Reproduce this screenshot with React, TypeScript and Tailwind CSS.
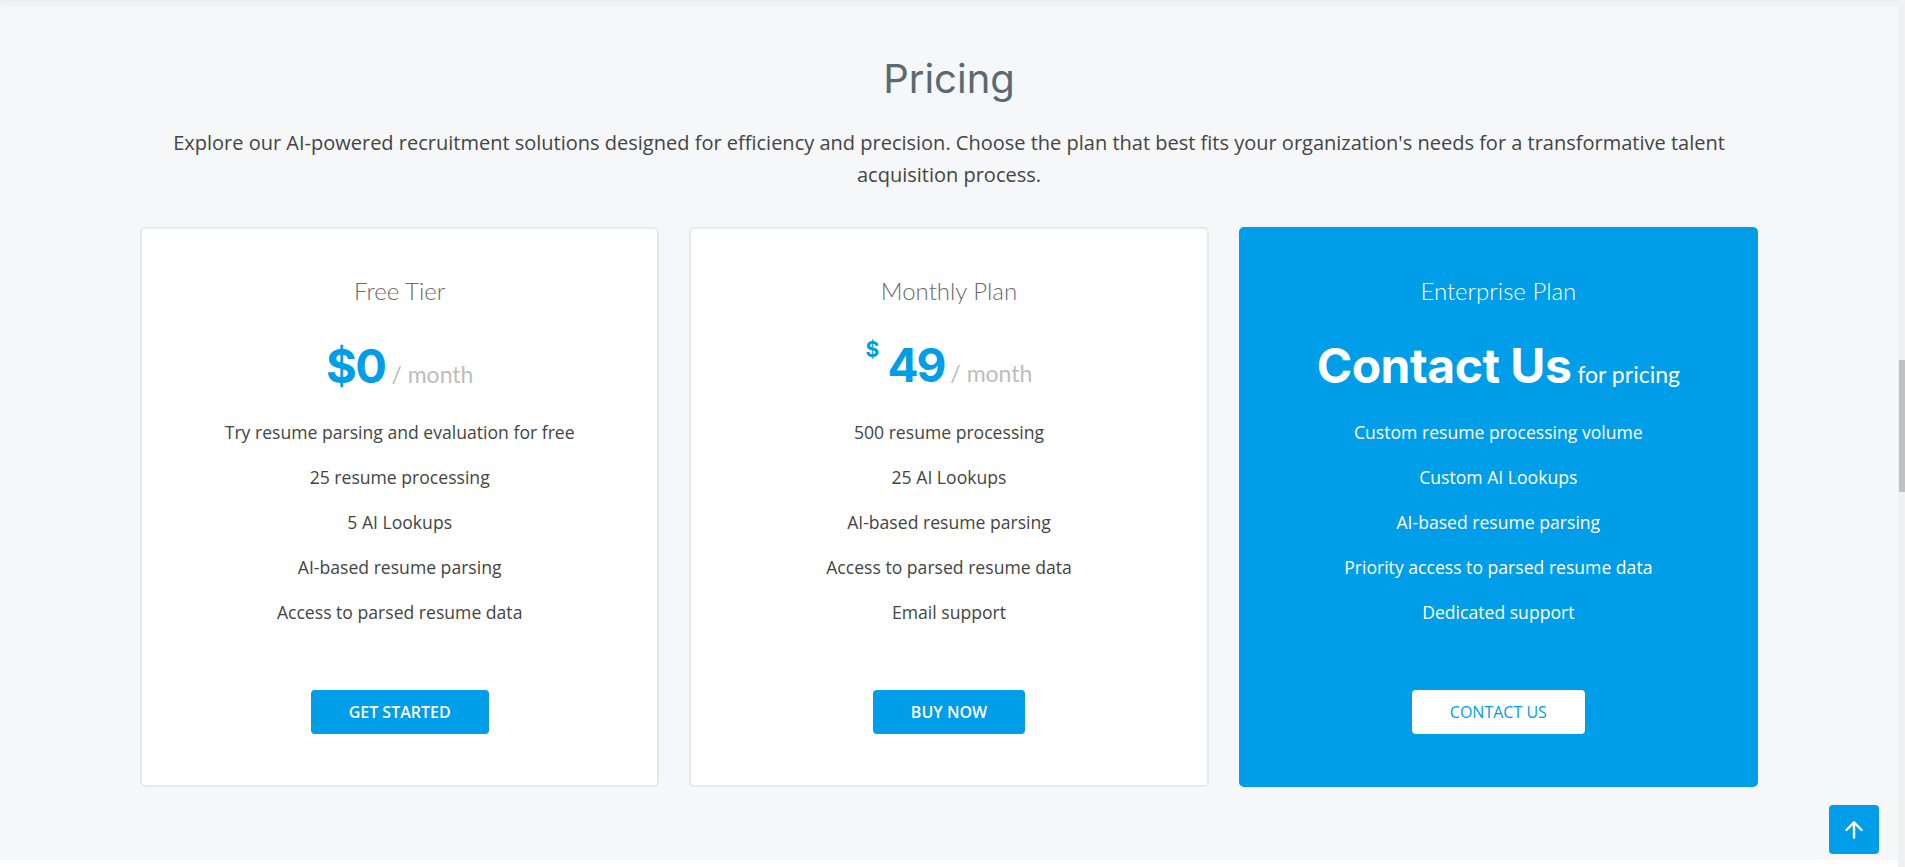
import { ArrowUp } from "lucide-react";

type Plan = {
  name: string;
  features: string[];
  button: string;
  featured?: boolean;
  price: "free" | "monthly" | "contact";
};

const plans: Plan[] = [
  {
    name: "Free Tier",
    price: "free",
    features: [
      "Try resume parsing and evaluation for free",
      "25 resume processing",
      "5 AI Lookups",
      "AI-based resume parsing",
      "Access to parsed resume data",
    ],
    button: "Get Started",
  },
  {
    name: "Monthly Plan",
    price: "monthly",
    features: [
      "500 resume processing",
      "25 AI Lookups",
      "AI-based resume parsing",
      "Access to parsed resume data",
      "Email support",
    ],
    button: "Buy Now",
  },
  {
    name: "Enterprise Plan",
    price: "contact",
    featured: true,
    features: [
      "Custom resume processing volume",
      "Custom AI Lookups",
      "AI-based resume parsing",
      "Priority access to parsed resume data",
      "Dedicated support",
    ],
    button: "Contact Us",
  },
];

const heading = { fontFamily: "Inter, 'Noto Sans', sans-serif" };
const body = { fontFamily: "'Open Sans', 'Noto Sans', sans-serif" };
const light = { fontFamily: "Lato, 'Open Sans', sans-serif" };

const Price = ({ plan }: { plan: Plan }) => {
  if (plan.price === "contact") {
    return (
      <div className="flex items-baseline justify-center h-[48px] leading-none">
        <span className="text-[48px] font-bold text-white tracking-[-0.5px]" style={heading}>
          Contact Us
        </span>
        <span className="ml-[6px] text-[23px] text-white" style={light}>
          for pricing
        </span>
      </div>
    );
  }

  return (
    <div className="flex items-baseline justify-center h-[48px] leading-none">
      {plan.price === "monthly" ? (
        <>
          <span className="self-start text-[21px] font-bold text-[#009de8] mt-[-3px] mr-[8px]" style={heading}>
            $
          </span>
          <span className="text-[46px] font-bold text-[#009de8] tracking-[-2px]" style={heading}>
            49
          </span>
        </>
      ) : (
        <span className="text-[47px] font-bold text-[#009de8] tracking-[-1.5px]" style={heading}>
          $0
        </span>
      )}
      <span className="ml-[6px] text-[23px] text-[#bdbdbd]" style={light}>
        / month
      </span>
    </div>
  );
};

const PlanCard = ({ plan }: { plan: Plan }) => {
  const featured = plan.featured;
  return (
    <div
      className={
        featured
          ? "rounded-[5px] bg-[#009de8] border-2 border-[#009de8] pt-[47px] pb-[51px] text-center"
          : "rounded-[5px] bg-white border-2 border-[#e7e9ec] pt-[47px] pb-[51px] text-center"
      }
    >
      <h3
        className={featured ? "text-[24px] leading-[30px] text-white font-light" : "text-[24px] leading-[30px] text-[#6a6a6a] font-light"}
        style={light}
      >
        {plan.name}
      </h3>

      <div className="mt-[36px]">
        <Price plan={plan} />
      </div>

      <ul className="mt-[20px]" style={body}>
        {plan.features.map((f) => (
          <li
            key={f}
            className={featured ? "py-[10px] text-[17.6px] leading-[25px] text-white" : "py-[10px] text-[17.6px] leading-[25px] text-[#444]"}
          >
            {f}
          </li>
        ))}
      </ul>

      <div className="mt-[55px] flex justify-center">
        <button
          className={
            featured
              ? "h-[44px] px-[38px] rounded-[4px] bg-white text-[#009de8] text-[16px] font-medium uppercase"
              : "h-[44px] px-[38px] rounded-[4px] bg-[#009de8] text-white text-[16px] font-semibold uppercase"
          }
          style={body}
        >
          {plan.button}
        </button>
      </div>
    </div>
  );
};

export default function App() {
  return (
    <div className="flex h-screen w-full overflow-hidden bg-white">
      <div className="flex-1 relative">
        <section className="h-[860px] bg-[#f6f7f9] shadow-[inset_0_8px_8px_-6px_rgba(0,0,0,0.06)] pt-[55px]">
          <h2 className="text-center text-[40px] leading-[48px] text-[#5a6a72]" style={heading}>
            Pricing
          </h2>
          <p
            className="mx-auto mt-[24px] max-w-[1580px] text-center text-[20px] leading-[32px] text-[#444]"
            style={body}
          >
            Explore our AI-powered recruitment solutions designed for efficiency and precision. Choose the plan that
            best fits your organization's needs for a transformative talent acquisition process.
          </p>

          <div className="mx-auto mt-[36px] grid w-[1618px] grid-cols-3 gap-[30px]">
            {plans.map((p) => (
              <PlanCard key={p.name} plan={p} />
            ))}
          </div>
        </section>

        <button className="absolute left-[1829px] top-[805px] flex h-[49px] w-[50px] items-center justify-center rounded-[4px] bg-[#009de8] text-white">
          <ArrowUp size={26} strokeWidth={2.2} />
        </button>
      </div>

      {/* scrollbar */}
      <div className="flex w-[7px] flex-col bg-[#f1f1f1]">
        <div className="h-[360px]" />
        <div className="ml-[1px] h-[132px] bg-[#c1c1c1]" />
      </div>
    </div>
  );
}
